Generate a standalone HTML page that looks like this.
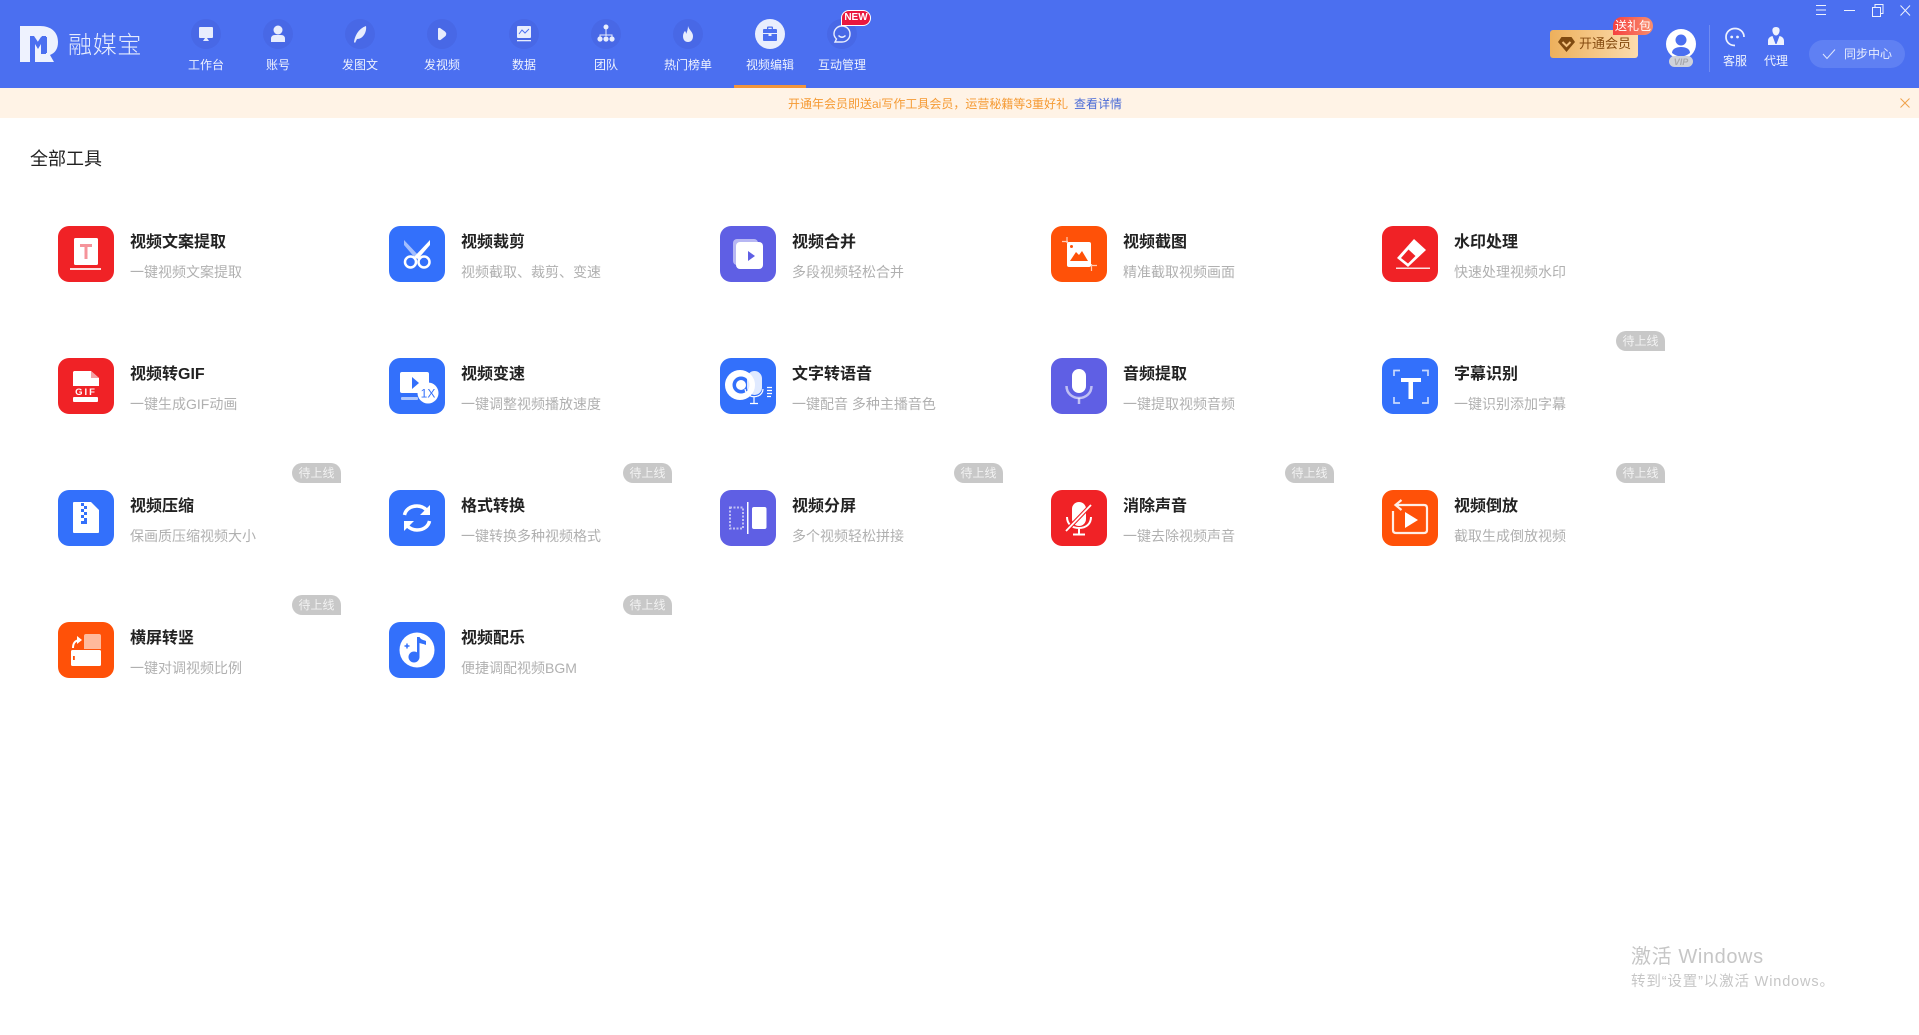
<!DOCTYPE html>
<html lang="zh-CN">
<head>
<meta charset="utf-8">
<title>融媒宝</title>
<style>
html,body{margin:0;padding:0;background:#fff}
body{position:relative;width:1919px;height:1035px;overflow:hidden;font-family:"Liberation Sans","Noto Sans CJK SC",sans-serif}
.abs,.abs *{box-sizing:border-box}
.abs{position:absolute}
#hd{left:0;top:0;width:1919px;height:88px;background:#4b6ff0}
#bn{left:0;top:88px;width:1919px;height:30px;background:#fff3e6}
.nav{position:absolute;top:19px;width:80px;height:58px;text-align:center;color:#eef2fe;font-size:12px}
.nav svg{position:absolute;left:25px;top:0;width:30px;height:30px}
.nav span{position:absolute;left:0;right:0;top:37px;line-height:18px;white-space:nowrap}
.t{position:absolute;width:300px;height:56px}
.t>svg{position:absolute;left:0;top:0;width:56px;height:56px}
.t b{position:absolute;left:72px;top:6px;font-size:16px;line-height:22px;color:#222;font-weight:700;white-space:nowrap}
.t i{position:absolute;left:72px;top:36px;font-size:14px;line-height:20px;color:#b0b0b0;font-style:normal;white-space:nowrap}
.t u{position:absolute;left:234px;top:-27px;width:49px;height:20px;background:#c8c8c8;color:#f2f2f2;font-size:12px;line-height:20px;text-align:center;text-decoration:none;border-radius:10px 10px 0 10px}
</style>
</head>
<body>
<div class="abs" id="hd"></div>
<div class="abs" id="bn"></div>

<!-- logo -->
<svg class="abs" style="left:20px;top:26px" width="39" height="36" viewBox="0 0 39 36"><path fill="#eef2fe" d="M0 0H20C31 0 38 6 38 16C38 23 35 27 30 29L34 36H15V14L19 20L22 13V27H27V11H21L17 17L11 10V36H0Z"/><path fill="#4b6ff0" d="M10 10H14L18 16L22 10H26V28H21V18L18 23L15 18V36H10Z"/></svg>
<div class="abs" style="left:68px;top:31px;width:80px;font-size:24px;line-height:30px;letter-spacing:.7px;color:#e6ecfd;white-space:nowrap;font-weight:300">融媒宝</div>

<!-- nav -->
<div class="nav" style="left:166px"><svg viewBox="0 0 30 30"><circle cx="15" cy="15" r="15" fill="#4868e6"/><path fill="#e8edfd" d="M9 8H21Q22 8 22 9V18Q22 19 21 19H9Q8 19 8 18V9Q8 8 9 8ZM12 22L14 19H16L18 22Z"/></svg><span>工作台</span></div>
<div class="nav" style="left:238px"><svg viewBox="0 0 30 30"><circle cx="15" cy="15" r="15" fill="#4868e6"/><circle cx="15" cy="11" r="4.500" fill="#e8edfd"/><path fill="#e8edfd" d="M8 23V20Q8 16 12 16H18Q22 16 22 20V23Z"/></svg><span>账号</span></div>
<div class="nav" style="left:320px"><svg viewBox="0 0 30 30"><circle cx="15" cy="15" r="15" fill="#4868e6"/><path fill="#e8edfd" d="M21 7C22 13 18 20 12 20L10 24L9 23C10 17 13 10 21 7Z"/></svg><span>发图文</span></div>
<div class="nav" style="left:402px"><svg viewBox="0 0 30 30"><circle cx="15" cy="15" r="15" fill="#4868e6"/><path fill="#e8edfd" d="M11 10Q11 8.500 13 9L18 12.500Q20.500 15 18 17.500L13.500 21Q11 21.500 11 19.500Z"/></svg><span>发视频</span></div>
<div class="nav" style="left:484px"><svg viewBox="0 0 30 30"><circle cx="15" cy="15" r="15" fill="#4868e6"/><rect x="8" y="7" width="14" height="12" rx="1" fill="#e8edfd"/><path fill="none" stroke="#4b6ff0" d="M10 15L13 11L16 14L20 10"/><rect x="8" y="21" width="14" height="1.300" fill="#e8edfd"/></svg><span>数据</span></div>
<div class="nav" style="left:566px"><svg viewBox="0 0 30 30"><circle cx="15" cy="15" r="15" fill="#4868e6"/><circle cx="15" cy="8" r="2.500" fill="#e8edfd"/><path fill="none" stroke="#e8edfd" d="M15 10V17M9 19V16H21V19"/><circle cx="9" cy="20" r="2.600" fill="#e8edfd"/><circle cx="15" cy="20" r="2.600" fill="#e8edfd"/><circle cx="21" cy="20" r="2.600" fill="#e8edfd"/></svg><span>团队</span></div>
<div class="nav" style="left:648px"><svg viewBox="0 0 30 30"><circle cx="15" cy="15" r="15" fill="#4868e6"/><path fill="#e8edfd" d="M15 7C16 11 20 13 20 17C20 21 18 23 15 23C12 23 10 21 10 17C10 15 11 13 12 12C13 13 13 14 13 15C14 13 15 10 15 7Z"/></svg><span>热门榜单</span></div>
<div class="nav" style="left:730px"><svg viewBox="0 0 30 30"><circle cx="15" cy="15" r="15" fill="#e9eefd"/><path fill="#4b6ff0" d="M12 10V8.500Q12 7.500 13 7.500H17Q18 7.500 18 8.500V10H21Q22 10 22 11V14H8V11Q8 10 9 10ZM13.300 10H16.700V8.800H13.300ZM8 15H13.500V17H16.500V15H22V21Q22 22 21 22H9Q8 22 8 21Z"/></svg><span>视频编辑</span></div>
<div class="abs" style="left:734px;top:85px;width:72px;height:3px;background:#f2953c"></div>
<div class="nav" style="left:802px"><svg viewBox="0 0 30 30"><circle cx="15" cy="15" r="15" fill="#4868e6"/><path fill="none" stroke="#e8edfd" stroke-width="1.400" d="M15 7C20 7 23 11 23 15C23 20 19 23 15 23H8L9.500 20C8 18.500 7 17 7 15C7 11 10 7 15 7Z"/><path fill="none" stroke="#e8edfd" stroke-width="1.400" d="M11.500 16.500Q15 20 18.500 16.500"/></svg><span>互动管理</span></div>
<div class="abs" style="left:841px;top:10px;width:30px;height:16px;border-radius:8px 8px 8px 0;background:#e9173f;border:1px solid #fff;color:#fff;font-size:10px;font-weight:700;line-height:14px;text-align:center">NEW</div>

<!-- window controls -->
<svg class="abs" style="left:1812px;top:2px" width="104" height="16" viewBox="0 0 104 16"><g fill="none" stroke="#eef2fe" stroke-width="1"><path d="M4 3.500H14M4 8H14M4 12.500H14"/><path d="M32 8.500H43"/><rect x="60.500" y="5.500" width="8" height="9"/><path d="M63 5V2.500H71V11.500H69"/><path d="M88.500 3.500L98 13.500M98 3.500L88.500 13.500"/></g></svg>

<!-- VIP -->
<div class="abs" style="left:1550px;top:30px;width:88px;height:28px;border-radius:3px;background:linear-gradient(90deg,#edb05c,#fcdcae)"></div>
<svg class="abs" style="left:1558px;top:36px" width="17" height="16" viewBox="0 0 17 16"><path fill="#7f4a10" d="M3.500 1H13.500L17 6L8.500 16L0 6Z"/><path fill="none" stroke="#f4c27e" stroke-width="2" d="M4.500 6L8.500 10L12.500 6"/></svg>
<div class="abs" style="left:1579px;top:35px;font-size:13px;line-height:18px;color:#854b10;white-space:nowrap">开通会员</div>
<div class="abs" style="left:1613px;top:17px;width:40px;height:18px;border-radius:9px 9px 9px 0;background:linear-gradient(90deg,#f5403f,#f98f6e);color:#fff;font-size:12px;line-height:18px;text-align:center;white-space:nowrap">送礼包</div>

<!-- avatar -->
<svg class="abs" style="left:1665px;top:28px" width="32" height="40" viewBox="0 0 32 40"><circle cx="16" cy="16" r="15" fill="#fff"/><circle cx="16" cy="12" r="5.500" fill="#4b6ff0"/><path fill="#4b6ff0" d="M7 25C7 21 11 19 16 19C21 19 25 21 25 25Q16 32 7 25Z"/><rect x="4" y="28" width="24" height="11" rx="5.500" fill="#cfd2da"/><text x="16" y="37" text-anchor="middle" font-size="9" font-weight="700" font-style="italic" fill="#a9a9ad" font-family="Liberation Sans">VIP</text></svg>
<div class="abs" style="left:1709px;top:25px;width:1px;height:47px;background:rgba(255,255,255,.2)"></div>

<!-- service / agent -->
<svg class="abs" style="left:1723px;top:26px" width="24" height="22" viewBox="0 0 24 22"><path fill="none" stroke="#eef2fe" stroke-width="1.700" d="M12 19.500C6 19.500 3 15.500 3 11C3 6 7 2.500 12 2.500C17 2.500 21 6 21 11"/><circle cx="8.700" cy="11" r="1.400" fill="#eef2fe"/><circle cx="14.500" cy="11" r="1.400" fill="#eef2fe"/></svg>
<div class="abs" style="left:1723px;top:52px;width:24px;font-size:12px;line-height:18px;color:#eef2fe;white-space:nowrap">客服</div>
<svg class="abs" style="left:1766px;top:26px" width="20" height="20" viewBox="0 0 20 20"><path fill="#eef2fe" d="M10 1C13 1 14 3 13.500 5.500C13 8 11.500 9.500 10 9.500C8.500 9.500 7 8 6.500 5.500C6 3 7 1 10 1ZM6.500 10L9.500 18H10.500L13.500 10C16 10.500 18 12 18 15V19H2V15C2 12 4 10.500 6.500 10Z"/></svg>
<div class="abs" style="left:1764px;top:52px;width:24px;font-size:12px;line-height:18px;color:#eef2fe;white-space:nowrap">代理</div>

<!-- sync -->
<div class="abs" style="left:1809px;top:40px;width:96px;height:28px;border-radius:14px;background:#5f80f3"></div>
<svg class="abs" style="left:1822px;top:47px" width="14" height="14" viewBox="0 0 14 14"><path fill="none" stroke="#dfe6fd" stroke-width="1" d="M1 7L5 11.500L13 2.500"/></svg>
<div class="abs" style="left:1844px;top:45px;font-size:12px;line-height:18px;color:#e8edfd;white-space:nowrap">同步中心</div>

<!-- banner -->
<div class="abs" style="left:788px;top:95px;font-size:12px;line-height:18px;color:#f59a33;white-space:nowrap">开通年会员即送ai写作工具会员，运营秘籍等3重好礼</div>
<div class="abs" style="left:1074px;top:95px;font-size:12px;line-height:18px;color:#4a6bd6;white-space:nowrap">查看详情</div>
<svg class="abs" style="left:1900px;top:98px" width="10" height="10" viewBox="0 0 10 10"><path fill="none" stroke="#efa24c" stroke-width="1" d="M.5 .5L9.500 9.500M9.500 .5L.5 9.500"/></svg>

<div class="abs" style="left:30px;top:146px;font-size:18px;line-height:26px;color:#222;white-space:nowrap">全部工具</div>

<!-- row 1 -->
<div class="t" style="left:58px;top:226px"><svg viewBox="0 0 56 56"><rect width="56" height="56" rx="11" fill="#f02226"/><rect x="16" y="12" width="24" height="27" rx="1.500" fill="#fff"/><path fill="#f5939a" d="M22 18H34V21H29.500V33H26.500V21H22Z"/><rect x="12" y="42" width="31" height="2" fill="#fff" opacity=".85"/></svg><b>视频文案提取</b><i>一键视频文案提取</i></div>
<div class="t" style="left:389px;top:226px"><svg viewBox="0 0 56 56"><rect width="56" height="56" rx="11" fill="#3370fb"/><path fill="#fff" opacity=".55" d="M15 14L31 31L27 33L15 19Z"/><path fill="#fff" d="M41 14L25 31L29 33L41 19Z"/><circle cx="21.500" cy="36" r="5.500" fill="none" stroke="#fff" stroke-width="2.500"/><circle cx="35" cy="36" r="5.500" fill="none" stroke="#fff" stroke-width="2.500"/></svg><b>视频裁剪</b><i>视频截取、裁剪、变速</i></div>
<div class="t" style="left:720px;top:226px"><svg viewBox="0 0 56 56"><rect width="56" height="56" rx="11" fill="#5f5fe4"/><rect x="13" y="13" width="25" height="26" rx="4" fill="#fff" opacity=".55"/><rect x="16" y="16" width="27" height="27" rx="4" fill="#fff"/><path fill="#5f5fe4" d="M28 25L35 30L28 35Z"/></svg><b>视频合并</b><i>多段视频轻松合并</i></div>
<div class="t" style="left:1051px;top:226px"><svg viewBox="0 0 56 56"><rect width="56" height="56" rx="11" fill="#ff5108"/><rect x="16" y="16" width="24" height="25" rx="2" fill="#fff"/><path fill="none" stroke="#fff" stroke-opacity=".7" stroke-width="1.200" d="M11 15.500H17M16 11V17M39 39.500H46M40.500 38V45"/><circle cx="20.500" cy="20.500" r="1.500" fill="#ff5108"/><path fill="#ff5108" d="M19 35L25 26L28 29L31 25L37 35Z"/></svg><b>视频截图</b><i>精准截取视频画面</i></div>
<div class="t" style="left:1382px;top:226px"><svg viewBox="0 0 56 56"><rect width="56" height="56" rx="11" fill="#f02226"/><path fill="#fff" d="M15 32L32 13L44 24L26 41Z"/><path fill="#f02226" d="M19 32L26.500 23.500L33.500 30L26 37.500Z"/><rect x="14" y="41.500" width="34" height="1.500" fill="#fff" opacity=".85"/></svg><b>水印处理</b><i>快速处理视频水印</i></div>

<!-- row 2 -->
<div class="t" style="left:58px;top:358px"><svg viewBox="0 0 56 56"><rect width="56" height="56" rx="11" fill="#f02226"/><path fill="#fff" d="M16 13H33L41 20V28H15V14Z"/><path fill="#f5a0a4" d="M33 13L41 20H33Z"/><text x="28" y="37" text-anchor="middle" font-size="9.500" font-weight="700" fill="#fff" letter-spacing="2" font-family="Liberation Sans">GIF</text><rect x="15" y="39" width="25" height="5" rx="1" fill="#fff"/></svg><b>视频转GIF</b><i>一键生成GIF动画</i></div>
<div class="t" style="left:389px;top:358px"><svg viewBox="0 0 56 56"><rect width="56" height="56" rx="11" fill="#3370fb"/><rect x="11" y="14" width="29" height="21" rx="2" fill="#fff"/><path fill="#3370fb" d="M23 19L30 25L23 31Z"/><rect x="12" y="39" width="17" height="3" rx="1" fill="#fff" opacity=".6"/><circle cx="39" cy="35" r="10.500" fill="#fff"/><text x="39" y="39.500" text-anchor="middle" font-size="12" fill="#3370fb" font-family="Liberation Sans">1X</text></svg><b>视频变速</b><i>一键调整视频播放速度</i></div>
<div class="t" style="left:720px;top:358px"><svg viewBox="0 0 56 56"><rect width="56" height="56" rx="11" fill="#3370fb"/><circle cx="20" cy="27" r="15" fill="#fff"/><circle cx="21" cy="27" r="8.500" fill="#3370fb"/><circle cx="21" cy="27" r="5" fill="#fff"/><rect x="27" y="13" width="15" height="24" rx="7.500" fill="#fff" opacity=".85"/><path fill="none" stroke="#fff" stroke-width="1.200" d="M25 31C26 38 33 40 38 38C41 37 43 34 43 31M34 39V45M30 45.500H38"/><path fill="none" stroke="#fff" stroke-width="1.200" d="M47 29.500H52M47 32.500H52M47 35.500H52M47 38.500H51"/></svg><b>文字转语音</b><i>一键配音 多种主播音色</i></div>
<div class="t" style="left:1051px;top:358px"><svg viewBox="0 0 56 56"><rect width="56" height="56" rx="11" fill="#5f5fe4"/><rect x="21" y="11" width="14" height="24" rx="7" fill="#fff"/><path fill="none" stroke="#fff" stroke-opacity=".6" stroke-width="2.500" d="M15.500 28C15.500 35 21 40 28 40C35 40 40.500 35 40.500 28"/><path stroke="#fff" stroke-opacity=".6" stroke-width="2.500" d="M28 40V46"/></svg><b>音频提取</b><i>一键提取视频音频</i></div>
<div class="t" style="left:1382px;top:358px"><svg viewBox="0 0 56 56"><rect width="56" height="56" rx="11" fill="#3370fb"/><path fill="none" stroke="#c9d9fd" stroke-width="1.700" d="M12 18V12.500H18M40 12.500H46V18M12 39V45H18M40 45H46V39"/><path fill="#fff" d="M19 20H39V24H31V41H26.500V24H19Z"/></svg><b>字幕识别</b><i>一键识别添加字幕</i><u>待上线</u></div>

<!-- row 3 -->
<div class="t" style="left:58px;top:490px"><svg viewBox="0 0 56 56"><rect width="56" height="56" rx="11" fill="#3370fb"/><path fill="#fff" d="M16 12H33L41 20V42Q41 43 40 43H16Q15 43 15 42V13Q15 12 16 12Z"/><path fill="#3370fb" d="M23 13H26V16H23ZM26 16H29V19H26ZM23 19H26V22H23ZM26 22H29V25H26ZM23 25H26V28H23ZM26 28H29V31H26ZM23 31H29V34H23Z"/></svg><b>视频压缩</b><i>保画质压缩视频大小</i><u>待上线</u></div>
<div class="t" style="left:389px;top:490px"><svg viewBox="0 0 56 56"><rect width="56" height="56" rx="11" fill="#3370fb"/><path fill="none" stroke="#fff" stroke-width="3.500" d="M15.500 25C16.500 20 21 16 28 16C32 16 35 17.500 37.500 20M40.500 31C39.500 36 35 40 28 40C24 40 21 38.500 18.500 36"/><path fill="#fff" d="M41 15V25H31ZM15 41V31H25Z"/></svg><b>格式转换</b><i>一键转换多种视频格式</i><u>待上线</u></div>
<div class="t" style="left:720px;top:490px"><svg viewBox="0 0 56 56"><rect width="56" height="56" rx="11" fill="#5f5fe4"/><rect x="27" y="12" width="1.500" height="32" fill="#fff"/><rect x="32" y="17" width="14.500" height="22" rx="2" fill="#fff"/><rect x="10" y="17.500" width="13" height="21" fill="none" stroke="#fff" stroke-opacity=".6" stroke-width="2" stroke-dasharray="2 1.500"/></svg><b>视频分屏</b><i>多个视频轻松拼接</i><u>待上线</u></div>
<div class="t" style="left:1051px;top:490px"><svg viewBox="0 0 56 56"><rect width="56" height="56" rx="11" fill="#f02226"/><rect x="21" y="12" width="14" height="24" rx="7" fill="#fff"/><path fill="none" stroke="#fff" stroke-width="2" d="M16 27C16 34 21 38 28 38C35 38 40 34 40 27M28 38V44M22 44.500H34"/><path stroke="#f02226" stroke-width="4" d="M14 42L41 14"/><path stroke="#fff" stroke-width="1.800" d="M15 41L40 15"/></svg><b>消除声音</b><i>一键去除视频声音</i><u>待上线</u></div>
<div class="t" style="left:1382px;top:490px"><svg viewBox="0 0 56 56"><rect width="56" height="56" rx="11" fill="#ff5108"/><path fill="none" stroke="#fff" stroke-opacity=".9" stroke-width="2.200" d="M14 15H42Q45 15 45 18V40Q45 43 42 43H14Q11 43 11 40V21M19.500 10L13.500 15L19.500 20"/><path fill="#fff" d="M23 22L36 30L23 38Z"/></svg><b>视频倒放</b><i>截取生成倒放视频</i><u>待上线</u></div>

<!-- row 4 -->
<div class="t" style="left:58px;top:622px"><svg viewBox="0 0 56 56"><rect width="56" height="56" rx="11" fill="#ff5108"/><path fill="#fff" opacity=".6" d="M28 12H41Q43 12 43 14V27H26V14Q26 12 28 12Z"/><rect x="13" y="28" width="30" height="16" rx="1.500" fill="#fff"/><rect x="15" y="34" width="1.800" height="4" fill="#ff5108"/><path fill="none" stroke="#fff" stroke-width="2" d="M15 26C15 21 17 19 21 18"/><path fill="#fff" d="M24 18L19 14V22Z"/></svg><b>横屏转竖</b><i>一键对调视频比例</i><u>待上线</u></div>
<div class="t" style="left:389px;top:622px"><svg viewBox="0 0 56 56"><rect width="56" height="56" rx="11" fill="#3370fb"/><circle cx="28" cy="28" r="17.500" fill="#fff"/><circle cx="25" cy="35" r="5.500" fill="#3370fb"/><path fill="#3370fb" d="M28 15H30.500V35H28ZM30.500 15C32 18 35 18 37 19V23C35 22 32 21.500 30.500 21Z"/><path stroke="#3370fb" stroke-width="1.500" d="M18 21.500V26.500M15.500 24H20.500"/></svg><b>视频配乐</b><i>便捷调配视频BGM</i><u>待上线</u></div>

<!-- activation watermark -->
<div class="abs" style="left:1631px;top:943px;font-size:20px;line-height:28px;color:#c6c6c6;white-space:nowrap;letter-spacing:.6px">激活 Windows</div>
<div class="abs" style="left:1631px;top:972px;font-size:14.500px;line-height:20px;color:#c6c6c6;white-space:nowrap;letter-spacing:.85px">转到“设置”以激活 Windows。</div>
</body>
</html>
